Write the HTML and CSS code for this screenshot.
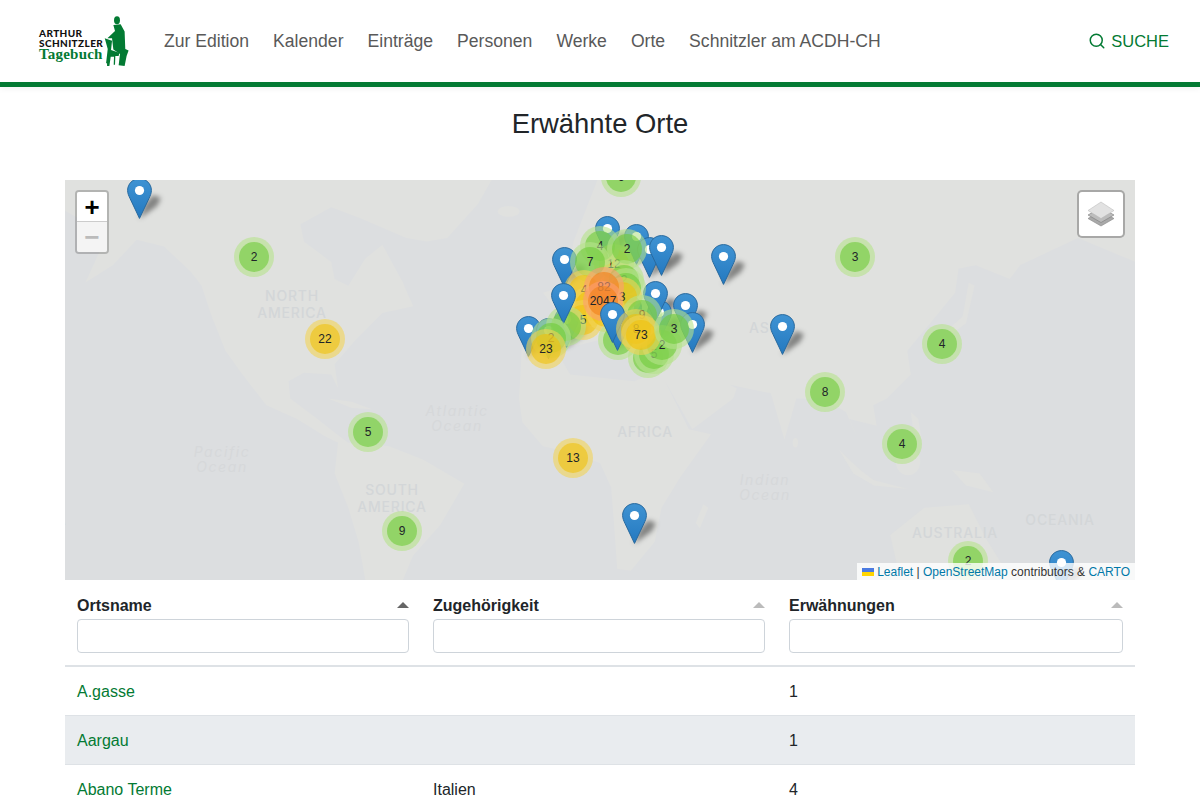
FILE: index.html
```html
<!DOCTYPE html>
<html lang="de">
<head>
    <meta charset="UTF-8">
    <meta name="viewport" content="width=device-width, initial-scale=1.0">
    <title>Erwähnte Orte</title>
    <link rel="stylesheet" href="styles.css">
</head>
<body>
    <header class="site-header">
        <a class="brand" href="#">
            <span class="brand-text">
                <span class="brand-name">ARTHUR</span>
                <span class="brand-name">SCHNITZLER</span>
                <span class="brand-sub">Tagebuch</span>
            </span>
            <svg class="brand-figure" viewBox="312 42 78 160">
                <ellipse cx="351" cy="58" rx="9" ry="12"/>
                <path d="M340 72 L362 70 L374 92 L376 145 L386 149 L380 166 L374 196 L356 194 L360 160 L340 146 L336 112 L322 112 L345 90 Z"/>
                <path d="M314 112 L336 120 L333 148 L358 156 L356 166 L346 166 L345 192 L341 192 L342 168 L332 168 L328 196 L321 196 L321 188 L318 188 L323 145 Z"/>
            </svg>
        </a>
        <nav class="main-nav">
            <a href="#">Zur Edition</a>
            <a href="#">Kalender</a>
            <a href="#">Einträge</a>
            <a href="#">Personen</a>
            <a href="#">Werke</a>
            <a href="#">Orte</a>
            <a href="#">Schnitzler am ACDH-CH</a>
        </nav>
        <a class="search-link" href="#">
            <svg viewBox="0 0 24 24" width="18" height="18"><circle cx="11" cy="11" r="8"/><path d="M21 21l-4.3-4.3"/></svg>
            SUCHE
        </a>
    </header>

    <main class="content">
        <h1>Erwähnte Orte</h1>

        <div class="map" id="map">
            <svg class="map-tiles" viewBox="0 0 1070 400">
                <g class="land" transform="scale(0.3413)">
                    <path d="M0 0 L0 90 L70 130 L110 190 L60 300 L140 250 L210 175 L290 195 L370 270 L400 310 L430 400 L470 500 L520 570 L590 660 L680 700 L760 750 L800 770 L790 860 L830 960 L860 1060 L880 1172 L990 1172 L1020 1100 L1100 1010 L1170 890 L1050 820 L950 780 L830 770 L790 740 L740 700 L660 640 L655 590 L700 565 L780 570 L800 610 L790 540 L850 470 L930 390 L1020 370 L990 300 L930 190 L880 230 L830 310 L790 290 L780 240 L700 180 L690 130 L780 80 L860 110 L1000 170 L1060 180 L1120 170 L1210 70 L1250 0 Z"/>
                    <ellipse cx="1300" cy="92" rx="32" ry="16"/>
                    <path d="M770 640 L840 650 L900 672 L840 668 Z"/>
                    <path d="M1560 0 L1490 180 L1470 310 L1400 330 L1440 380 L1390 470 L1340 450 L1335 560 L1330 640 L1340 710 L1400 780 L1490 800 L1568 830 L1600 900 L1608 1000 L1618 1140 L1658 1145 L1728 1060 L1748 960 L1803 870 L1893 745 L1828 730 L1758 590 L1838 730 L1958 640 L1968 610 L1948 600 L2068 625 L2108 760 L2143 640 L2218 640 L2288 680 L2328 770 L2298 700 L2378 720 L2368 660 L2408 640 L2478 570 L2468 500 L2518 440 L2608 330 L2618 260 L2668 250 L2768 290 L2798 250 L2968 170 L3136 240 L3136 0 Z"/>
                    <path d="M2648 300 L2665 310 L2640 420 L2600 450 L2590 435 L2630 400 Z"/>
                    <path d="M2268 790 L2330 850 L2370 880 L2470 905 L2370 895 L2310 860 Z"/>
                    <ellipse cx="2470" cy="825" rx="36" ry="40"/>
                    <path d="M2478 680 L2500 700 L2510 760 L2485 730 Z"/>
                    <path d="M2598 850 L2680 860 L2720 915 L2640 895 Z"/>
                    <ellipse cx="2140" cy="770" rx="8" ry="14"/>
                    <path d="M1870 950 L1885 960 L1860 1020 L1848 1005 Z"/>
                    <path d="M2418 1040 L2518 960 L2648 950 L2698 1050 L2748 1130 L2708 1172 L2448 1172 Z"/>
                </g>
                <path class="sea" transform="scale(0.3413)" d="M1440 500 L1560 470 L1668 540 L1738 560 L1668 590 L1480 570 Z"/>
                <g class="continent">
                    <text x="227" y="121">NORTH</text>
                    <text x="227" y="138">AMERICA</text>
                    <text x="327" y="315">SOUTH</text>
                    <text x="327" y="332">AMERICA</text>
                    <text x="580" y="257">AFRICA</text>
                    <text x="702" y="153">ASIA</text>
                    <text x="890" y="358">AUSTRALIA</text>
                    <text x="995" y="345">OCEANIA</text>
                    <text x="-4" y="345">A</text>
                </g>
                <g class="ocean-name">
                    <text x="157" y="277">Pacific</text>
                    <text x="157" y="292">Ocean</text>
                    <text x="392" y="236">Atlantic</text>
                    <text x="392" y="251">Ocean</text>
                    <text x="700" y="305">Indian</text>
                    <text x="700" y="320">Ocean</text>
                </g>
            </svg>

            <div class="marker-layer" id="shadows"></div>
            <div class="marker-layer" id="markers"></div>

            <div class="zoom-control">
                <a class="zoom-in" href="#">+</a>
                <a class="zoom-out" href="#">&minus;</a>
            </div>
            <div class="layers-control">
                <svg viewBox="0 0 26 26" width="26" height="28">
                    <path class="layer-low" d="M13 10 L26 17.5 L13 25 L0 17.5 Z"/>
                    <path class="layer-mid" d="M13 6.5 L26 14 L13 21.5 L0 14 Z"/>
                    <path class="layer-top" d="M13 1 L26 9.5 L13 17.5 L0 9.5 Z"/>
                </svg>
            </div>
            <div class="attribution">
                <svg viewBox="0 0 12 8" width="12" height="8"><rect width="12" height="4" fill="#4C7BE1"/><rect y="4" width="12" height="4" fill="#FFD500"/></svg>
                <a href="#">Leaflet</a> | <a href="#">OpenStreetMap</a> contributors &amp; <a href="#">CARTO</a>
            </div>
        </div>

        <table class="places">
            <thead>
                <tr>
                    <th class="col-a"><span class="sort-arrow active"></span>Ortsname<input type="text"></th>
                    <th class="col-b"><span class="sort-arrow"></span>Zugehörigkeit<input type="text"></th>
                    <th class="col-c"><span class="sort-arrow"></span>Erwähnungen<input type="text"></th>
                </tr>
            </thead>
            <tbody>
                <tr>
                    <td><a href="#">A.gasse</a></td>
                    <td></td>
                    <td>1</td>
                </tr>
                <tr class="hl">
                    <td><a href="#">Aargau</a></td>
                    <td></td>
                    <td>1</td>
                </tr>
                <tr>
                    <td><a href="#">Abano Terme</a></td>
                    <td>Italien</td>
                    <td>4</td>
                </tr>
            </tbody>
        </table>
    </main>

    <script src="map.js"></script>
</body>
</html>
```

FILE: styles.css
```css
* {
    box-sizing: border-box;
}
body {
    margin: 0;
    font-family: "Liberation Sans", Arial, sans-serif;
    font-size: 16px;
    line-height: 1.5;
    color: #212529;
    background-color: #fff;
}
a {
    text-decoration: none;
    color: #037a33;
}

/* header */
.site-header {
    display: flex;
    align-items: center;
    height: 87px;
    padding: 0 31px 0 39px;
    border-bottom: 5px solid #037a33;
    box-shadow: 0 2px 6px rgba(0,0,0,0.05);
}
.brand {
    display: flex;
    align-items: flex-start;
    width: 125px;
    height: 52px;
}
.brand-text {
    display: flex;
    flex-direction: column;
    width: 65px;
    padding-top: 13px;
}
.brand-name {
    font-family: "Lato", sans-serif;
    font-weight: 900;
    font-size: 10px;
    line-height: 10px;
    letter-spacing: 0.4px;
    color: #111;
    white-space: nowrap;
}
.brand-sub {
    font-family: "Liberation Serif", serif;
    font-weight: 700;
    font-size: 15px;
    line-height: 13px;
    letter-spacing: 0.2px;
    color: #037a33;
}
.brand-figure {
    width: 26px;
    height: 53px;
    fill: #037a33;
}
.main-nav {
    display: flex;
    flex: 1;
    gap: 24px;
    font-size: 17.6px;
}
.main-nav a {
    color: #595959;
}
.search-link {
    display: flex;
    align-items: center;
    gap: 5px;
    font-size: 16.5px;
}
.search-link svg {
    fill: none;
    stroke: #037a33;
    stroke-width: 2;
    stroke-linecap: round;
}

.content {
    width: 1070px;
    margin: 0 auto;
}
h1 {
    margin: 20px 0 39px;
    font-size: 27.4px;
    font-weight: 500;
    line-height: 34px;
    text-align: center;
}

/* map */
.map {
    position: relative;
    height: 400px;
    overflow: hidden;
    background-color: #dcdee0;
    font-size: 12px;
}
.map-tiles {
    display: block;
    width: 1070px;
    height: 400px;
}
.land {
    fill: #e0e1df;
}
.sea {
    fill: #dcdee0;
}
.continent text {
    font-family: "Inter", sans-serif;
    font-size: 14px;
    font-weight: 500;
    letter-spacing: 0.8px;
    text-anchor: middle;
    fill: #d3d6d8;
}
.ocean-name text {
    font-family: "Inter", sans-serif;
    font-size: 14px;
    font-style: italic;
    letter-spacing: 1.6px;
    text-anchor: middle;
    fill: #d6d8da;
}
.marker-layer {
    position: absolute;
    left: 0;
    top: 0;
}
.pin, .pin-shadow, .cluster {
    position: absolute;
}
.pin svg, .pin-shadow svg {
    display: block;
}
.cluster {
    width: 40px;
    height: 40px;
    padding: 5px;
    border-radius: 20px;
    background-color: rgba(181,226,140,0.6);
}
.cluster span {
    display: block;
    height: 30px;
    border-radius: 15px;
    background-color: rgba(110,204,57,0.6);
    line-height: 30px;
    text-align: center;
}
.cluster.medium {
    background-color: rgba(241,211,87,0.6);
}
.cluster.medium span {
    background-color: rgba(240,194,12,0.6);
}
.cluster.large {
    background-color: rgba(253,156,115,0.6);
}
.cluster.large span {
    background-color: rgba(241,128,23,0.6);
}

/* map controls */
.zoom-control {
    position: absolute;
    left: 10px;
    top: 10px;
    width: 34px;
    border: 2px solid rgba(0,0,0,0.2);
    border-radius: 4px;
    background-clip: padding-box;
}
.zoom-control a {
    display: block;
    height: 30px;
    font-family: "Liberation Mono", monospace;
    font-weight: 700;
    font-size: 26px;
    line-height: 35px;
    text-align: center;
}
.zoom-in {
    background-color: #fff;
    color: #000;
    border-bottom: 1px solid #ccc;
    border-radius: 2px 2px 0 0;
}
.zoom-out {
    background-color: #f4f4f4;
    color: #bbb;
    border-radius: 0 0 2px 2px;
}
.layers-control {
    position: absolute;
    right: 10px;
    top: 10px;
    display: flex;
    align-items: center;
    justify-content: center;
    width: 48px;
    height: 48px;
    border: 2px solid rgba(0,0,0,0.25);
    border-radius: 5px;
    background-color: #fff;
    background-clip: padding-box;
}
.layer-low {
    fill: #a9a9a9;
    stroke: #868686;
    stroke-width: 0.6;
}
.layer-mid {
    fill: #bcbcbc;
    stroke: #7a7a7a;
    stroke-width: 0.6;
}
.layer-top {
    fill: #e2e2e2;
    stroke: #b4b4b4;
    stroke-width: 0.5;
}
.attribution {
    position: absolute;
    right: 0;
    bottom: 0;
    padding: 1px 5px 0;
    background-color: rgba(255,255,255,0.8);
    line-height: 16px;
    color: #333;
}
.attribution a {
    color: #0078a8;
}

/* table */
.places {
    width: 1070px;
    table-layout: fixed;
    border-collapse: collapse;
}
.col-a, .col-b {
    width: 356px;
}
.col-c {
    width: 358px;
}
.places th {
    position: relative;
    padding: 14px 12px 12px;
    border-bottom: 2px solid #dee2e6;
    text-align: left;
    font-weight: 700;
}
.places th input {
    display: block;
    width: 100%;
    height: 34px;
    margin-top: 1px;
    border: 1px solid #ced4da;
    border-radius: 4px;
}
.sort-arrow {
    position: absolute;
    right: 12px;
    top: 22px;
    border-left: 6px solid transparent;
    border-right: 6px solid transparent;
    border-bottom: 6px solid #bbb;
}
.sort-arrow.active {
    border-bottom-color: #666;
}
.places td {
    height: 49px;
    padding: 13px 12px 11px;
    border-bottom: 1px solid #dee2e6;
}
.hl td {
    background-color: #e9ecef;
}
```

FILE: map.js
```js
// pin: x of tip, y of tip (page coordinates). cluster: centre x, centre y, count, size
var MAP_LEFT = 65;
var MAP_TOP = 180;

// order is stacking order, last one on top
var items = [
    ['pin', 139, 218],
    ['pin', 607, 256],
    ['pin', 636, 264],
    ['pin', 649, 277],
    ['pin', 661, 275],
    ['pin', 723, 284],
    ['pin', 782, 354],
    ['pin', 634, 543],
    ['pin', 1061, 590],
    ['pin', 564, 287],
    ['pin', 528, 356],
    ['pin', 548, 358],
    ['pin', 566, 347],
    ['pin', 659, 340],
    ['pin', 655, 321],
    ['pin', 685, 333],
    ['pin', 692, 352],
    ['pin', 629, 335],
    ['c', 254, 257, '2'],
    ['c', 325, 339, '22', 'medium'],
    ['c', 855, 257, '3'],
    ['c', 942, 344, '4'],
    ['c', 825, 392, '8'],
    ['c', 902, 444, '4'],
    ['c', 368, 432, '5'],
    ['c', 573, 458, '13', 'medium'],
    ['c', 402, 531, '9'],
    ['c', 968, 561, '2'],
    ['c', 621, 177, '6'],
    ['c', 614, 264, '12', 'medium'],
    ['c', 600, 246, '4'],
    ['c', 590, 262, '7'],
    ['c', 627, 249, '2'],
    ['c', 624, 280, '2'],
    ['c', 626, 288, ''],
    ['c', 584, 290, '4', 'medium'],
    ['c', 622, 297, '3', 'medium'],
    ['c', 590, 306, '', 'medium'],
    ['c', 583, 320, '5', 'medium'],
    ['c', 606, 312, '', 'medium'],
    ['c', 604, 287, '82', 'large'],
    ['c', 603, 301, '2047', 'large'],
    ['c', 566, 326, ''],
    ['pin', 563, 323],
    ['c', 551, 338, '2'],
    ['c', 546, 349, '23', 'medium'],
    ['c', 642, 315, '9'],
    ['c', 648, 358, ''],
    ['c', 654, 354, '5'],
    ['c', 662, 345, '2'],
    ['c', 618, 340, ''],
    ['pin', 617, 350],
    ['pin', 612, 342],
    ['c', 636, 329, '8', 'medium'],
    ['c', 641, 335, '73', 'medium'],
    ['c', 674, 329, '3']
];

var shadows = document.getElementById('shadows');
var markers = document.getElementById('markers');

function pinSvg() {
    return '<svg width="25" height="41" viewBox="0 0 25 41">' +
        '<defs><linearGradient id="pinfill" x1="0" y1="0" x2="0" y2="1">' +
        '<stop offset="0" stop-color="#3f93d3"/><stop offset="1" stop-color="#2479c0"/></linearGradient></defs>' +
        '<path d="M12.5 .6C5.8 .6 .6 5.9 .6 12.4c0 3 1.2 5.4 2.4 8L12.5 40.4l9.5-20c1.2-2.6 2.4-5 2.4-8C24.4 5.9 19.2 .6 12.5 .6z" fill="url(#pinfill)" stroke="#2a6a9e" stroke-width="1"/>' +
        '<circle cx="12.5" cy="12.5" r="4.6" fill="#fff"/></svg>';
}

function shadowSvg() {
    return '<svg width="45" height="45" viewBox="0 0 45 45">' +
        '<defs><filter id="pinblur" x="-30%" y="-30%" width="160%" height="160%"><feGaussianBlur stdDeviation="2.4"/></filter></defs>' +
        '<path d="M12 41 L18 26 L26 17 L34 20 L30 28 Z" fill="#000" fill-opacity="0.42" filter="url(#pinblur)"/></svg>';
}

items.forEach(function (item) {
    var el = document.createElement('div');
    if (item[0] === 'pin') {
        el.className = 'pin';
        el.style.left = (item[1] - MAP_LEFT - 12) + 'px';
        el.style.top = (item[2] - MAP_TOP - 40) + 'px';
        el.innerHTML = pinSvg();

        var sh = document.createElement('div');
        sh.className = 'pin-shadow';
        sh.style.left = (item[1] - MAP_LEFT - 12) + 'px';
        sh.style.top = (item[2] - MAP_TOP - 40) + 'px';
        sh.innerHTML = shadowSvg();
        shadows.appendChild(sh);
    } else {
        el.className = 'cluster ' + (item[4] || '');
        el.style.left = (item[1] - MAP_LEFT - 20) + 'px';
        el.style.top = (item[2] - MAP_TOP - 20) + 'px';
        el.innerHTML = '<span>' + item[3] + '</span>';
    }
    markers.appendChild(el);
});
```
